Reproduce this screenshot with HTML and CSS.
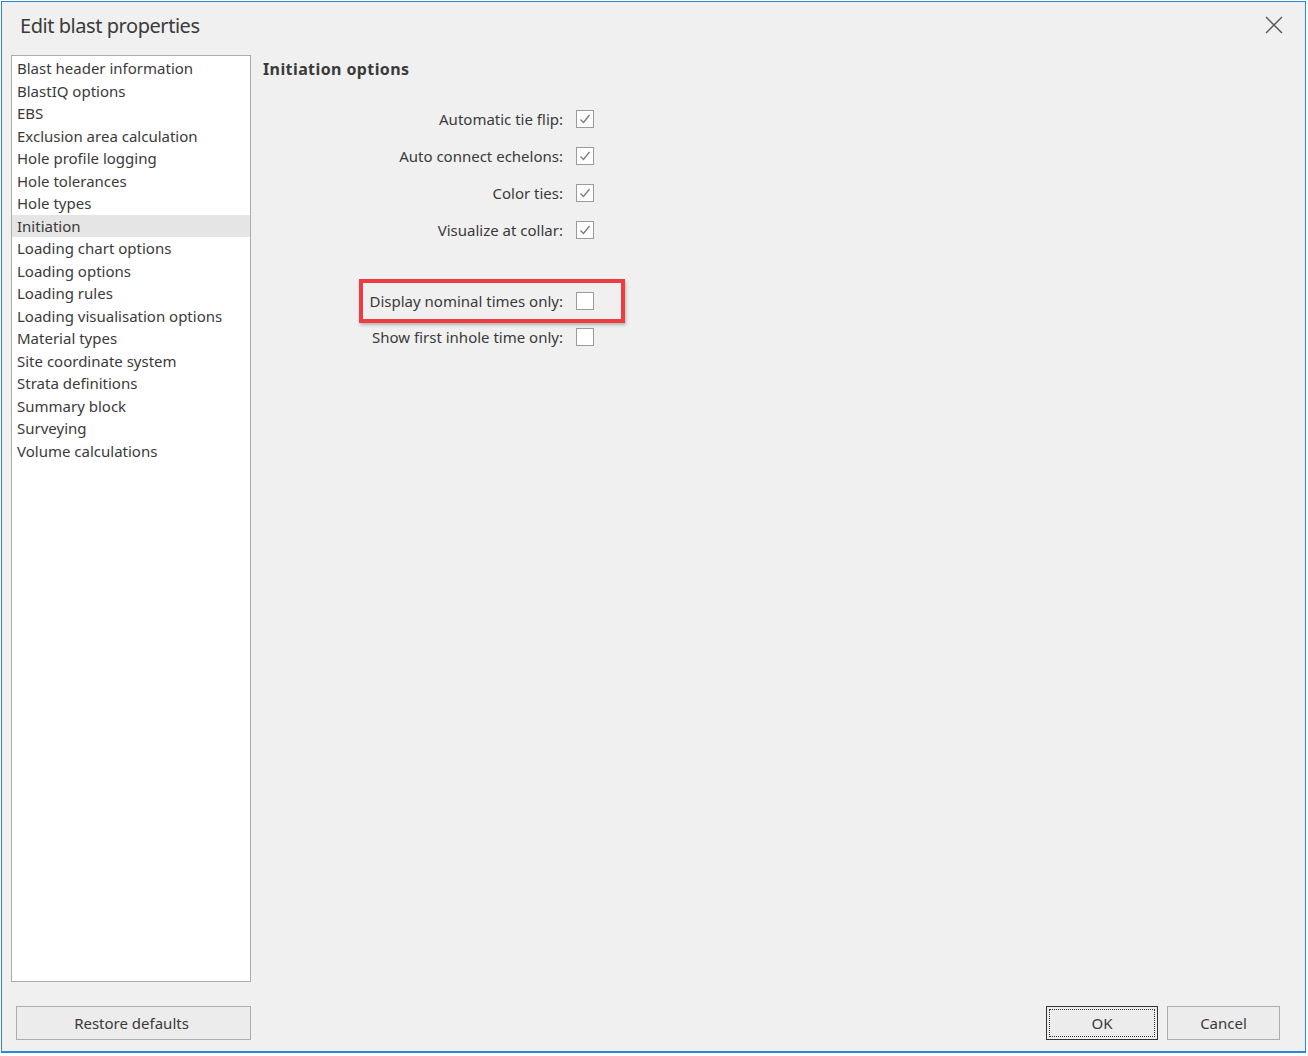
FILE: index.html
```html
<!DOCTYPE html>
<html>
<head>
<meta charset="utf-8">
<title>Edit blast properties</title>
<link rel="stylesheet" href="styles.css">
</head>
<body>
<div class="window">
  <div class="titlebar">
    <span class="title">Edit blast properties</span>
    <svg class="close" width="18" height="18" viewBox="0 0 18 18"><path d="M1 1 L17 17 M17 1 L1 17" stroke="#555" stroke-width="1.4" fill="none"/></svg>
  </div>
  <div class="content">
    <ul class="list">
      <li>Blast header information</li>
      <li>BlastIQ options</li>
      <li>EBS</li>
      <li>Exclusion area calculation</li>
      <li>Hole profile logging</li>
      <li>Hole tolerances</li>
      <li>Hole types</li>
      <li class="selected">Initiation</li>
      <li>Loading chart options</li>
      <li>Loading options</li>
      <li>Loading rules</li>
      <li>Loading visualisation options</li>
      <li>Material types</li>
      <li>Site coordinate system</li>
      <li>Strata definitions</li>
      <li>Summary block</li>
      <li>Surveying</li>
      <li>Volume calculations</li>
    </ul>
    <div class="panel">
      <div class="heading">Initiation options</div>
      <div class="rows">
        <div class="row"><span class="label">Automatic tie flip:</span><span class="cb"><svg viewBox="0 0 18 18" width="18" height="18"><path d="M4.5 9.5 L7.5 12.5 L13.5 5" stroke="#7a7a7a" stroke-width="1.3" fill="none"/></svg></span></div>
        <div class="row"><span class="label">Auto connect echelons:</span><span class="cb"><svg viewBox="0 0 18 18" width="18" height="18"><path d="M4.5 9.5 L7.5 12.5 L13.5 5" stroke="#7a7a7a" stroke-width="1.3" fill="none"/></svg></span></div>
        <div class="row"><span class="label">Color ties:</span><span class="cb"><svg viewBox="0 0 18 18" width="18" height="18"><path d="M4.5 9.5 L7.5 12.5 L13.5 5" stroke="#7a7a7a" stroke-width="1.3" fill="none"/></svg></span></div>
        <div class="row"><span class="label">Visualize at collar:</span><span class="cb"><svg viewBox="0 0 18 18" width="18" height="18"><path d="M4.5 9.5 L7.5 12.5 L13.5 5" stroke="#7a7a7a" stroke-width="1.3" fill="none"/></svg></span></div>
      </div>
      <div class="rows second">
        <div class="row highlighted"><span class="label">Display nominal times only:</span><span class="cb"></span><span class="mark"></span></div>
        <div class="row"><span class="label">Show first inhole time only:</span><span class="cb"></span></div>
      </div>
    </div>
  </div>
  <div class="footer">
    <button class="btn restore">Restore defaults</button>
    <div class="actions">
      <button class="btn ok"><span class="focus">OK</span></button>
      <button class="btn cancel">Cancel</button>
    </div>
  </div>
</div>
</body>
</html>
```

FILE: styles.css
```css
html, body {
  margin: 0;
  padding: 0;
  background: #ffffff;
}
body {
  font-family: "Noto Sans", "Open Sans", sans-serif;
  color: #333;
}
.window {
  margin: 1px 0 0 1px;
  width: 1305px;
  height: 1052px;
  box-sizing: border-box;
  border: 1px solid #2b88d8;
  border-bottom-width: 2px;
  background: #f0f0f0;
  display: flex;
  flex-direction: column;
}
.titlebar {
  height: 53px;
  flex: none;
  display: flex;
  align-items: flex-start;
  justify-content: space-between;
  box-sizing: border-box;
  padding: 10px 22px 0 18px;
}
.title {
  font-size: 20px;
  color: #3a3a3a;
  letter-spacing: -0.45px;
}
.close {
  margin-top: 4px;
}
.content {
  flex: 1;
  display: flex;
  min-height: 0;
}
.list {
  list-style: none;
  margin: 0 0 0 9px;
  padding: 1px 0 0 0;
  width: 240px;
  box-sizing: border-box;
  height: 927px;
  background: #fff;
  border: 1px solid #acacac;
  font-size: 15px;
  color: #3a3a3a;
}
.list li {
  height: 22.5px;
  line-height: 22.5px;
  padding-left: 5px;
  white-space: nowrap;
}
.list li.selected {
  background: #e5e5e5;
}
.panel {
  padding: 1px 0 0 12px;
  flex: 1;
}
.heading {
  font-weight: bold;
  font-size: 16px;
  color: #3a3a3a;
  height: 26px;
  line-height: 26px;
  letter-spacing: 0.4px;
}
.rows {
  margin-top: 18px;
  display: flex;
  flex-direction: column;
}
.rows.second {
  margin-top: 35px;
}
.row {
  position: relative;
  display: flex;
  align-items: center;
  height: 37px;
  font-size: 15px;
  color: #3a3a3a;
}
.rows.second .row {
  height: 36px;
}
.label {
  width: 300px;
  text-align: right;
  white-space: nowrap;
}
.cb {
  margin-left: 13px;
  width: 18px;
  height: 18px;
  box-sizing: border-box;
  border: 1px solid #9a9a9a;
  background: #fff;
  display: flex;
}
.cb svg {
  margin: -1px;
}
.mark {
  position: absolute;
  left: 96px;
  top: -4px;
  width: 266px;
  height: 44px;
  box-sizing: border-box;
  border: 4px solid #ec3d42;
  box-shadow: 1px 2px 3px rgba(0,0,0,0.25);
}
.footer {
  flex: none;
  height: 70px;
  display: flex;
  justify-content: space-between;
  align-items: flex-start;
  padding: 25px 25px 0 14px;
  box-sizing: border-box;
}
.btn {
  font-family: "Noto Sans", "Open Sans", sans-serif;
  font-size: 15px;
  color: #3a3a3a;
  height: 34px;
  background: #ececec;
  border: 1px solid #adadad;
  padding: 0;
}
.restore {
  width: 235px;
  padding-right: 4px;
}
.actions {
  display: flex;
  gap: 9px;
}
.ok {
  width: 112px;
  border: 1px solid #333;
  padding: 2px;
}
.ok .focus {
  display: flex;
  align-items: center;
  justify-content: center;
  height: 100%;
  box-sizing: border-box;
  border: 1px dotted #333;
}
.cancel {
  width: 113px;
}
```
